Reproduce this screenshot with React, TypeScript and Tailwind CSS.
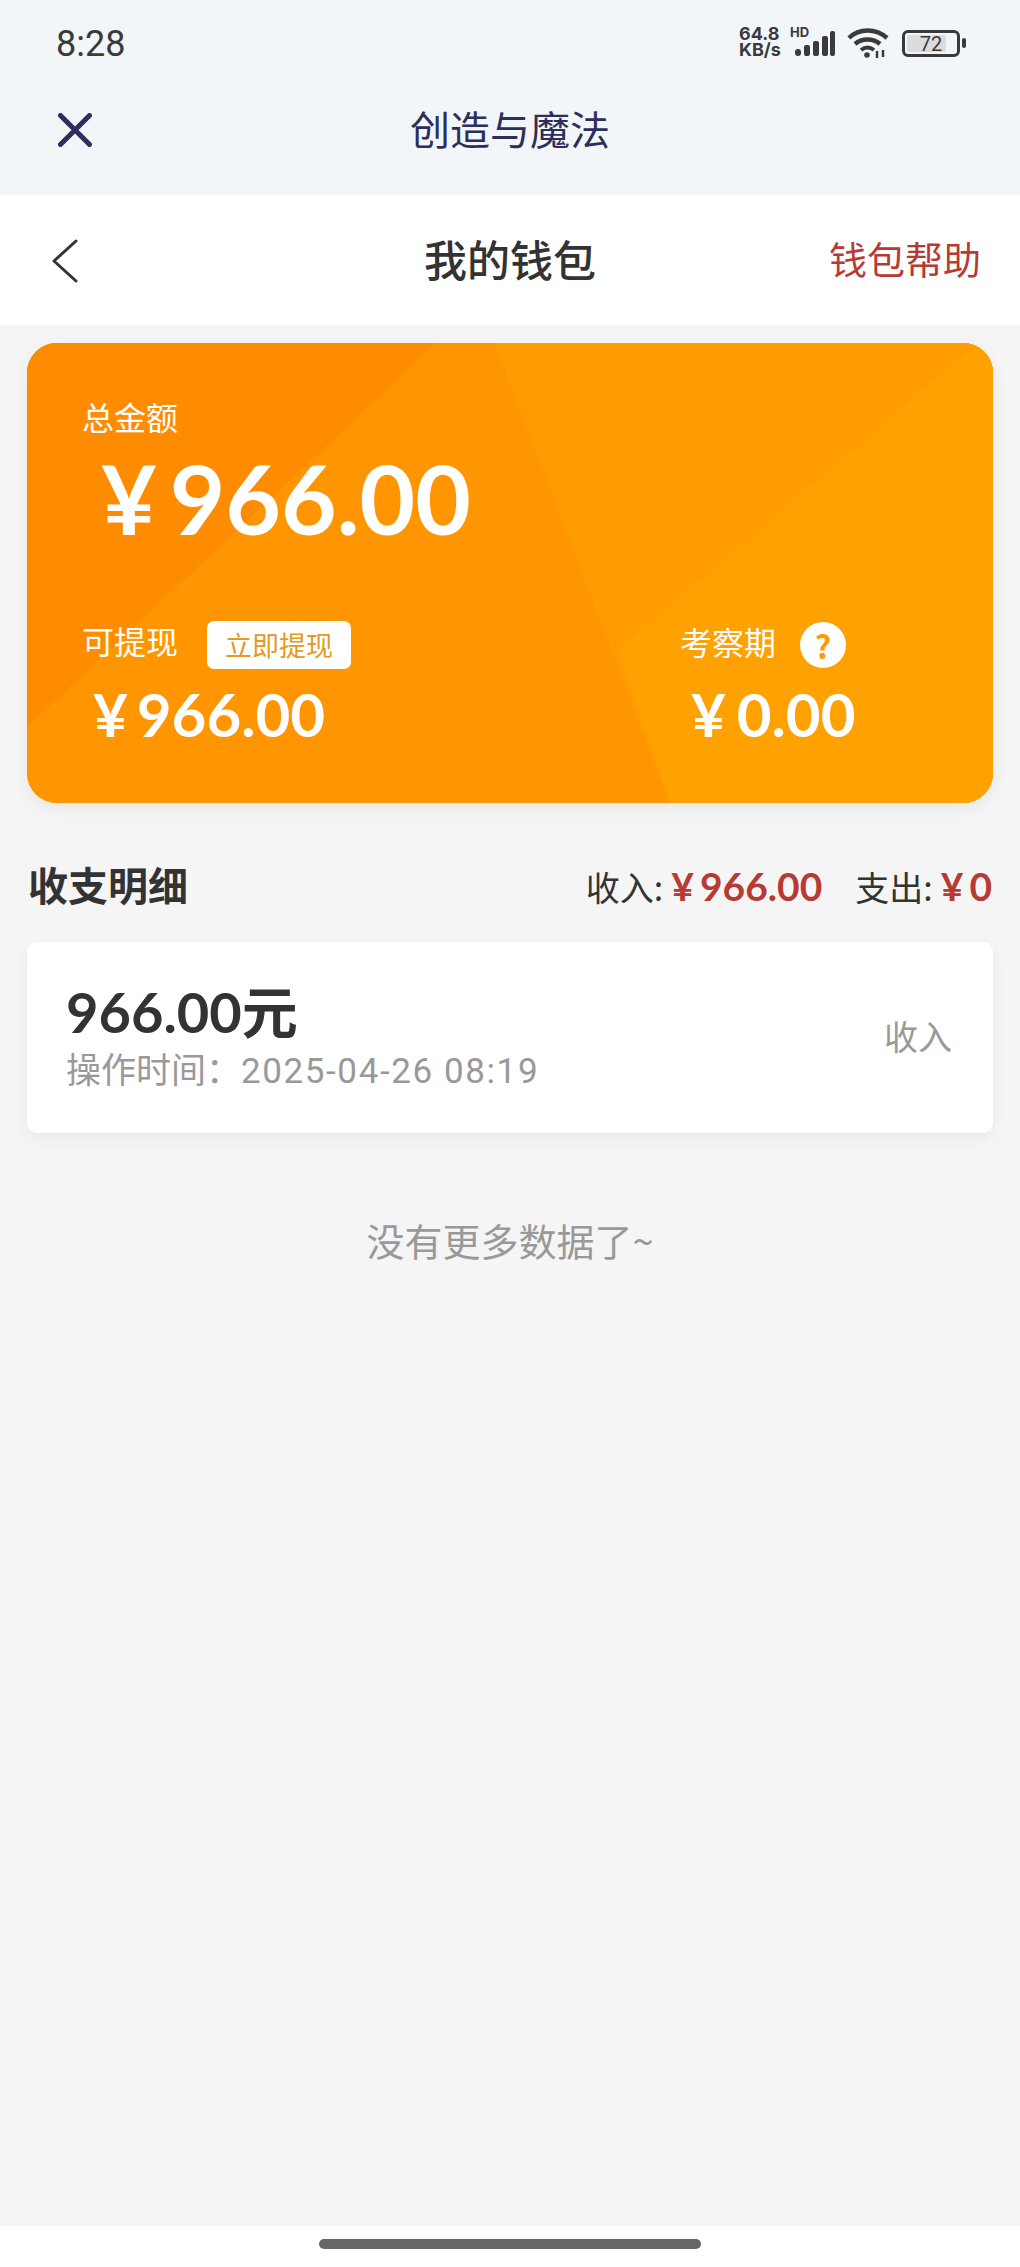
import React from "react";

const cjk = "font-['Noto_Sans_CJK_SC','Noto_Sans',sans-serif]";
const num = "font-['Lato','Noto_Sans_CJK_SC',sans-serif]";

function Signal() {
  return (
    <svg width="40" height="26" viewBox="0 0 40 26" className="absolute left-[795px] top-[31px]" fill="#3a3a3a">
      <rect x="0" y="18" width="6" height="7" rx="3" />
      <rect x="9" y="14" width="6" height="11" rx="2" />
      <rect x="18" y="10" width="6" height="15" rx="2" />
      <rect x="27" y="5" width="6" height="20" rx="2" />
      <rect x="35" y="0" width="5" height="25" rx="2" />
    </svg>
  );
}

function Wifi() {
  return (
    <svg width="42" height="30" viewBox="0 0 42 30" className="absolute left-[847px] top-[28px]" fill="none" stroke="#3a3a3a" strokeLinecap="butt">
      <path d="M2 10 C12 0 29 0 40 10" strokeWidth="4.5" />
      <path d="M8 16 C15 10 26 10 33 16" strokeWidth="4.5" />
      <path d="M14 22 C18 19 23 19 27 22" strokeWidth="4" />
      <circle cx="20" cy="27" r="2.8" fill="#3a3a3a" stroke="none" />
      <path d="M30 23 V30 M36 22 V29" strokeWidth="2.5" />
    </svg>
  );
}

export default function App() {
  return (
    <div className={`w-[1020px] h-[2267px] flex flex-col bg-[#f5f5f5] overflow-hidden ${cjk}`}>
      <header className="relative h-[195px] shrink-0 bg-[#f3f6f9]">
        <div className="h-[84px] pt-[4px] flex items-center pl-[56px] text-[36px] text-[#3a3a3a] font-['Roboto',sans-serif]">8:28</div>
        <div className="absolute left-[739px] top-[26px] font-['Inter',sans-serif] font-bold text-[18px] leading-[16px] text-[#3a3a3a]">
          64.8
          <br />
          KB/s
        </div>
        <div className="absolute left-[790px] top-[25px] font-['Inter',sans-serif] font-bold text-[13px] leading-[14px] text-[#3a3a3a]">HD</div>
        <Signal />
        <Wifi />
        <div className="absolute left-[902px] top-[30px] w-[58px] h-[27px] rounded-[6px] border-[3px] border-[#3a3a3a] p-[2px]">
          <div className="w-[39px] h-full rounded-[2px] bg-[#dcdcdc]" />
          <div className="absolute inset-0 flex items-center justify-center font-['Roboto',sans-serif] text-[20px] text-[#3a3a3a]">72</div>
        </div>
        <div className="absolute left-[962px] top-[38px] w-[4px] h-[10px] rounded-[2px] bg-[#3a3a3a]" />
        <div className="relative h-[88px] flex items-center justify-center">
          <svg width="34" height="34" viewBox="0 0 34 34" className="absolute left-[58px] top-[29px]" stroke="#2c2e5c" strokeWidth="5" strokeLinecap="round">
            <path d="M2.5 2.5 L31.5 31.5 M31.5 2.5 L2.5 31.5" />
          </svg>
          <span className="text-[40px] text-[#2c2e5c]">创造与魔法</span>
        </div>
      </header>

      <nav className="relative h-[130px] shrink-0 bg-white flex items-center justify-center">
        <svg width="26" height="44" viewBox="0 0 26 44" className="absolute left-[52px] top-[44px]" fill="none" stroke="#333" strokeWidth="3" strokeLinecap="round" strokeLinejoin="round">
          <path d="M24 2 L2 22 L24 42" />
        </svg>
        <span className="text-[43px] text-[#333] font-medium mb-[4px]">我的钱包</span>
        <span className="absolute right-[39px] top-[9px] text-[38px] leading-[108px] text-[#b83a35]">钱包帮助</span>
      </nav>

      <main className="flex-1 px-[27px] pt-[18px] flex flex-col">
        <section className="relative h-[460px] rounded-[30px] overflow-hidden bg-[#ff9500] text-white shadow-[0_6px_18px_rgba(0,0,0,0.06)]">
          <svg className="absolute inset-0" width="966" height="460" viewBox="0 0 966 460">
            <rect width="966" height="460" fill="#ff9500" />
            <polygon points="0,0 409,0 0,384" fill="#ff8c00" />
            <polygon points="467,0 966,0 966,460 643,460" fill="#ff9d00" />
            <polygon points="942,7 966,7 966,460 643,460 591,307" fill="#ffa100" />
          </svg>
          <div className="relative pl-[55px] pt-[53px]">
            <div className="text-[32px] leading-[46px] -mt-[3px]">总金额</div>
            <div className={`${num} font-bold text-[96px] leading-[100px] mt-[9px] pl-[19px] flex whitespace-nowrap`}>
              <span>¥</span>
              <span className="ml-[13px]">966.00</span>
            </div>
            <div className="flex mt-[73px]">
              <div className="w-[598px]">
                <div className="flex items-center h-[48px]">
                  <span className="text-[32px] mb-[10px]">可提现</span>
                  <span className="ml-[29px] w-[144px] h-[48px] rounded-[7px] bg-white text-[#e39a1f] text-[27px] flex items-center justify-center">立即提现</span>
                </div>
                <div className={`${num} font-bold text-[60px] leading-[66px] mt-[12px] pl-[11px] flex whitespace-nowrap`}>
                  <span>¥</span>
                  <span className="ml-[9px]">966.00</span>
                </div>
              </div>
              <div>
                <div className="flex items-center h-[48px]">
                  <span className="text-[32px] mb-[8px]">考察期</span>
                  <span className="ml-[24px] w-[46px] h-[46px] rounded-full bg-white text-[#ff9a00] text-[32px] font-bold flex items-center justify-center">?</span>
                </div>
                <div className={`${num} font-bold text-[60px] leading-[66px] mt-[12px] pl-[11px] flex whitespace-nowrap`}>
                  <span>¥</span>
                  <span className="ml-[11px]">0.00</span>
                </div>
              </div>
            </div>
          </div>
        </section>

        <div className="flex items-center justify-between h-[60px] mt-[54px]">
          <span className="text-[40px] font-bold text-[#333] pl-[1px] mb-[6px]">收支明细</span>
          <div className="flex items-center text-[#333] text-[34px] mb-[2px] pr-[1px]">
            <span>收入:</span>
            <span className={`${num} font-bold text-[#b83a35] text-[39px] ml-[8px] flex whitespace-nowrap`}>
              <span>¥</span>
              <span className="ml-[6px]">966.00</span>
            </span>
            <span className="ml-[33px]">支出:</span>
            <span className={`${num} font-bold text-[#b83a35] text-[39px] ml-[8px] flex whitespace-nowrap`}>
              <span>¥</span>
              <span className="ml-[6px]">0</span>
            </span>
          </div>
        </div>

        <div className="mt-[25px] h-[191px] rounded-[10px] bg-white shadow-[0_6px_16px_rgba(0,0,0,0.05)] flex items-center justify-between pl-[39px] pr-[41px]">
          <div>
            <div className="font-bold text-[56px] leading-[62px] text-[#333] font-['Lato','Noto_Sans_CJK_SC',sans-serif]">966.00元</div>
            <div className="mt-[3px] text-[35px] leading-[44px] text-[#999] whitespace-nowrap">操作时间：<span className="font-['Roboto',sans-serif] tracking-[1.6px]">2025-04-26 08:19</span></div>
          </div>
          <span className="text-[34px] text-[#999] mb-[4px]">收入</span>
        </div>

        <div className="mt-[80px] text-center text-[38px] leading-[54px] text-[#999]">没有更多数据了~</div>
      </main>

      <footer className="h-[41px] shrink-0 bg-white flex justify-center pt-[13px]">
        <div className="w-[382px] h-[10px] rounded-full bg-[#666]" />
      </footer>
    </div>
  );
}
